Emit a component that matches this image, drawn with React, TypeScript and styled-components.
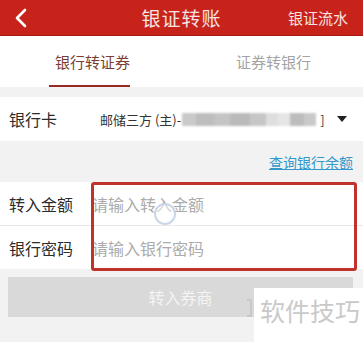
import React from "react";
import styled, { createGlobalStyle } from "styled-components";

const GlobalStyle = createGlobalStyle`
  html, body {
    margin: 0;
    padding: 0;
    background: #f2f2f2;
    font-family: "Noto Sans CJK SC", "Noto Sans", sans-serif;
  }
`;

// masked account number, drawn as blurred grey blocks
const blurBlocks = [
  { w: 14, c: "#c9c9c9" },
  { w: 18, c: "#bdbdbd" },
  { w: 16, c: "#c4c4c4" },
  { w: 20, c: "#bababa" },
  { w: 16, c: "#c6c6c6" },
  { w: 12, c: "#dedede" },
  { w: 12, c: "#e6e6e6" },
  { w: 14, c: "#bcbcbc" },
  { w: 12, c: "#c9c9c9" },
];

function App() {
  return (
    <>
      <GlobalStyle />
      <Page>
        <Header>
          <BackButton>
            <svg width="14" height="20" viewBox="0 0 14 20">
              <path
                d="M11 2 L3 10 L11 18"
                fill="none"
                stroke="#fff"
                strokeWidth="2.6"
                strokeLinecap="round"
                strokeLinejoin="round"
              />
            </svg>
          </BackButton>
          <HeaderTitle>银证转账</HeaderTitle>
          <HeaderAction>银证流水</HeaderAction>
        </Header>

        <Tabs>
          <Tab active>银行转证券</Tab>
          <Tab>证券转银行</Tab>
        </Tabs>

        <CardRow>
          <Label width={91}>银行卡</Label>
          <CardValue>
            邮储三方 (主)-
            <Blur>
              {blurBlocks.map((b, i) => (
                <span key={i} style={{ width: b.w, background: b.c }} />
              ))}
            </Blur>
            <Bracket>]</Bracket>
          </CardValue>
          <Caret />
        </CardRow>

        <LinkRow>
          <BalanceLink>查询银行余额</BalanceLink>
        </LinkRow>

        <InputSection>
          <InputRow>
            <Label width={83}>转入金额</Label>
            <Placeholder>请输入转入金额</Placeholder>
          </InputRow>
          <InputRow last>
            <Label width={83}>银行密码</Label>
            <Placeholder>请输入银行密码</Placeholder>
          </InputRow>
          <Spinner />
          <Highlight />
        </InputSection>

        <ButtonWrap>
          <SubmitButton>转入券商</SubmitButton>
        </ButtonWrap>

        <Watermark>
          <WatermarkEdge />
          <WatermarkText>软件技巧</WatermarkText>
        </Watermark>
      </Page>
    </>
  );
}

export default App;

const Page = styled.div`
  position: relative;
  width: 363px;
  height: 342px;
  overflow: hidden;
  background: #f2f2f2;
`;

const Header = styled.div`
  height: 35px;
  background: #c8231a;
  border-bottom: 1px solid #a51a12;
  display: grid;
  grid-template-columns: 100px 1fr 100px;
  align-items: center;
  color: #fff;
`;

const BackButton = styled.div`
  display: flex;
  align-items: center;
  padding-left: 14px;
  height: 100%;
`;

const HeaderTitle = styled.div`
  text-align: center;
  font-size: 19px;
  letter-spacing: 1px;
  color: #f6e4e2;
`;

const HeaderAction = styled.div`
  text-align: right;
  padding-right: 15px;
  font-size: 15px;
  color: #f6e4e2;
`;

const Tabs = styled.div`
  height: 51px;
  background: #fff;
  display: flex;
  margin-bottom: 10px;
`;

const Tab = styled.div<{ active?: boolean }>`
  position: relative;
  display: flex;
  align-items: center;
  box-sizing: border-box;
  font-size: 15px;
  color: ${(p) => (p.active ? "#7a3d33" : "#a3a3a3")};
  &:first-child {
    width: 180px;
    padding-left: 55px;
  }
  &:last-child {
    flex: 1;
    padding-left: 56px;
  }
  &::after {
    content: "";
    display: ${(p) => (p.active ? "block" : "none")};
    position: absolute;
    left: 49px;
    width: 81px;
    bottom: 0;
    height: 2px;
    background: #9b2a22;
  }
`;

const CardRow = styled.div`
  height: 44px;
  background: #fff;
  display: flex;
  align-items: center;
  padding: 0 16px 0 9px;
`;

const Label = styled.div<{ width: number }>`
  width: ${(p) => p.width}px;
  flex-shrink: 0;
  font-size: 16px;
  color: #2b2b2b;
`;

const CardValue = styled.div`
  flex: 1;
  display: flex;
  align-items: center;
  font-size: 13px;
  color: #333;
`;

const Blur = styled.div`
  display: flex;
  height: 13px;
  margin-left: 1px;
  filter: blur(1.2px);
  span {
    display: block;
    height: 100%;
  }
`;

const Bracket = styled.span`
  margin-left: 4px;
  color: #444;
`;

const Caret = styled.div`
  width: 0;
  height: 0;
  border-left: 5px solid transparent;
  border-right: 5px solid transparent;
  border-top: 6px solid #222;
`;

const LinkRow = styled.div`
  height: 41px;
  display: flex;
  align-items: center;
  justify-content: flex-end;
  padding-right: 10px;
`;

const BalanceLink = styled.a`
  font-size: 14px;
  color: #3399cc;
  text-decoration: underline;
  cursor: pointer;
`;

const InputSection = styled.div`
  position: relative;
  background: #fff;
`;

const InputRow = styled.div<{ last?: boolean }>`
  height: 43px;
  display: flex;
  align-items: center;
  padding-left: 9px;
  border-bottom: ${(p) => (p.last ? "none" : "1px solid #e8e8e8")};
`;

const Placeholder = styled.div`
  font-size: 16px;
  color: #ababab;
`;

const Spinner = styled.div`
  position: absolute;
  left: 154px;
  top: 21px;
  width: 18px;
  height: 18px;
  border-radius: 50%;
  border: 2px solid rgba(190, 205, 225, 0.8);
  background: rgba(255, 255, 255, 0.5);
`;

const Highlight = styled.div`
  position: absolute;
  left: 91px;
  top: 0;
  width: 266px;
  height: 89px;
  box-sizing: border-box;
  border: 3px solid #c0322c;
  border-radius: 3px;
`;

const ButtonWrap = styled.div`
  padding: 8px 10px 0 8px;
`;

const SubmitButton = styled.div`
  height: 40px;
  background: #d9d9d9;
  display: flex;
  align-items: center;
  justify-content: center;
  font-size: 16px;
  color: #f4f4f4;
`;

const Watermark = styled.div`
  position: absolute;
  left: 247px;
  top: 288px;
  right: 0;
  bottom: 0;
  display: flex;
  align-items: flex-start;
`;

const WatermarkEdge = styled.div`
  width: 5px;
  height: 18px;
  margin: 11px 2px 0 0;
  border-top: 2px solid #c8c8c8;
  border-bottom: 2px solid #c8c8c8;
  border-right: 2px solid #c8c8c8;
  box-sizing: border-box;
`;

const WatermarkText = styled.div`
  flex: 1;
  height: 100%;
  background: #fff;
  font-size: 25px;
  color: #c9c9c9;
  padding: 2px 0 0 6px;
  line-height: 40px;
`;
